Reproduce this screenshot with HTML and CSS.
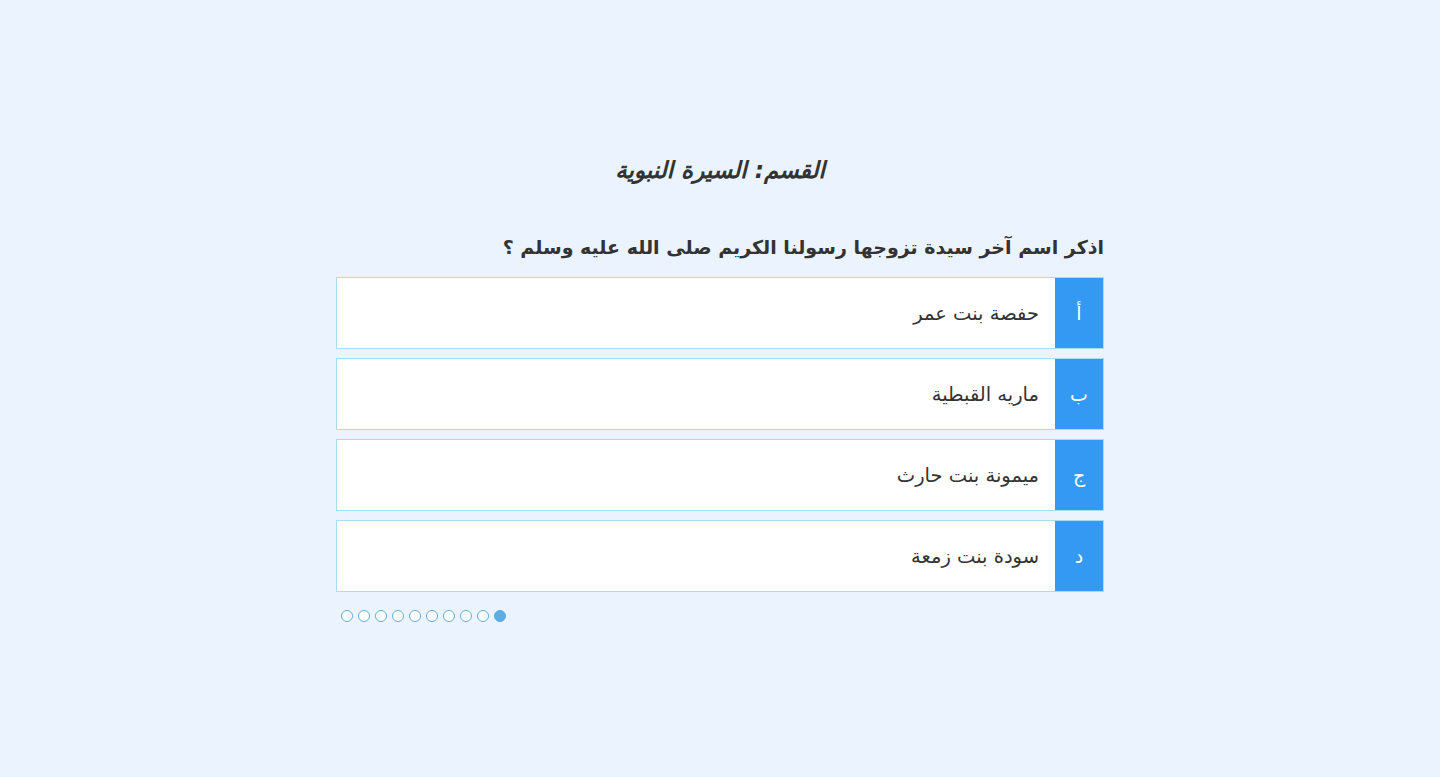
FILE: index.html
```html
<!DOCTYPE html>
<html lang="ar" dir="rtl">
<head>
<meta charset="utf-8">
<title>اختبار</title>
<link rel="stylesheet" href="styles.css">
</head>
<body>
<main class="quiz">
  <h2 class="category">القسم: السيرة النبوية</h2>
  <h3 class="question">اذكر اسم آخر سيدة تزوجها رسولنا الكريم صلى الله عليه وسلم ؟</h3>
  <ul class="options">
    <li class="option"><span class="letter">أ</span><span class="answer">حفصة بنت عمر</span></li>
    <li class="option"><span class="letter">ب</span><span class="answer">ماريه القبطية</span></li>
    <li class="option"><span class="letter">ج</span><span class="answer">ميمونة بنت حارث</span></li>
    <li class="option"><span class="letter">د</span><span class="answer">سودة بنت زمعة</span></li>
  </ul>
  <div class="dots">
    <span class="dot active"></span>
    <span class="dot"></span>
    <span class="dot"></span>
    <span class="dot"></span>
    <span class="dot"></span>
    <span class="dot"></span>
    <span class="dot"></span>
    <span class="dot"></span>
    <span class="dot"></span>
    <span class="dot"></span>
  </div>
</main>
</body>
</html>
```
FILE: styles.css
```css
* { box-sizing: border-box; }
html, body {
  margin: 0;
  padding: 0;
  background: #ebf4fe;
  height: 100%;
}
body {
  font-family: "DejaVu Sans", "Noto Sans", sans-serif;
  color: #333;
}
.quiz {
  width: 768px;
  margin: 0 auto;
  padding-top: 154px;
}
.category {
  margin: 0;
  text-align: center;
  font-size: 23px;
  font-style: italic;
  font-weight: bold;
  line-height: 32px;
}
.question {
  margin: 45px 0 0;
  font-size: 19px;
  font-weight: bold;
  line-height: 32px;
}
.options {
  list-style: none;
  margin: 14px 0 0;
  padding: 0;
  display: flex;
  flex-direction: column;
  gap: 9px;
}
.option {
  display: flex;
  height: 72px;
  background: #fff;
  border: 1px solid #a9dbf3;
}
.letter {
  width: 48px;
  flex: none;
  background: #3399f3;
  color: #fff;
  display: flex;
  align-items: center;
  justify-content: center;
  font-size: 19px;
}
.answer {
  display: flex;
  align-items: center;
  padding-right: 16px;
  font-size: 19.5px;
}
.dots {
  display: flex;
  justify-content: flex-end;
  gap: 5px;
  margin-top: 18px;
  padding-left: 5px;
}
.dot {
  width: 12px;
  height: 12px;
  border-radius: 50%;
  border: 1.5px solid #5dade2;
  background: #fff;
}
.dot.active {
  background: #5dade2;
}
```
